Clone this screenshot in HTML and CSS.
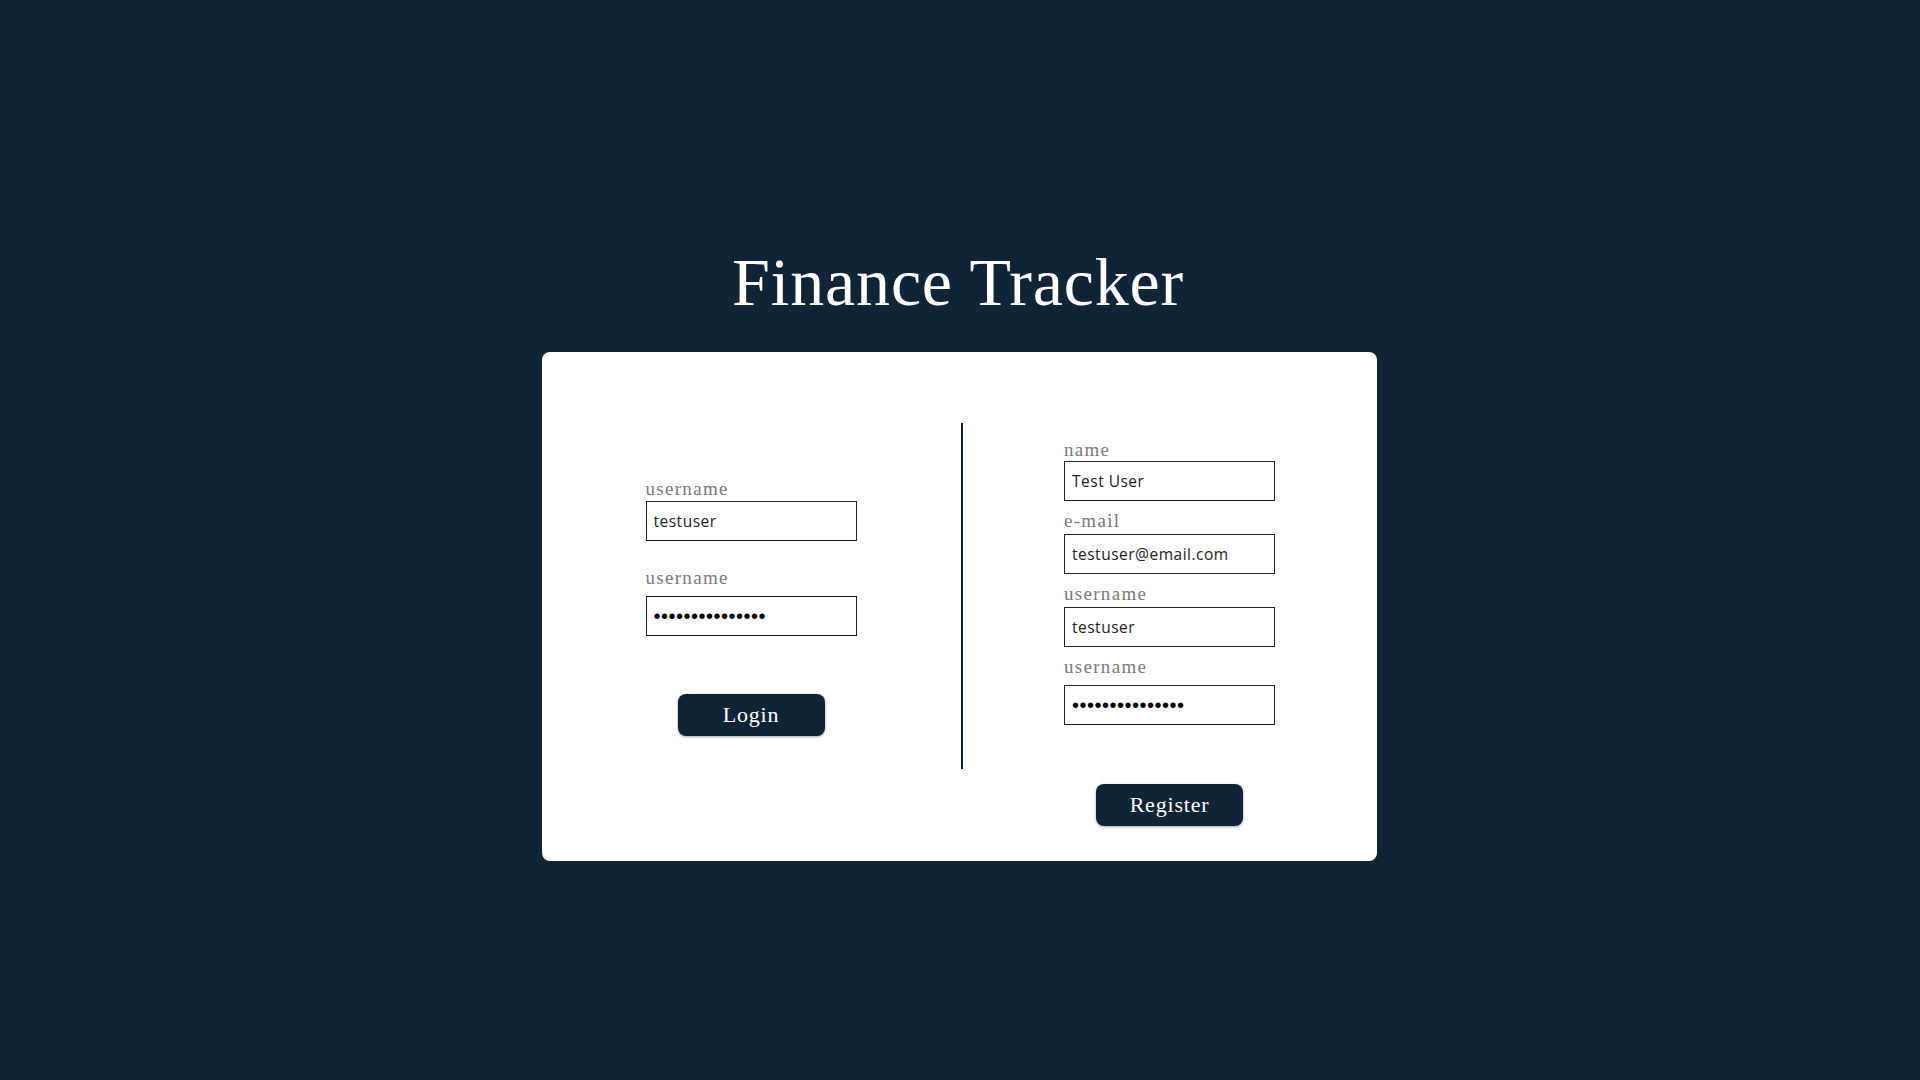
FILE: index.html
```html
<!DOCTYPE html>
<html lang="en">
<head>
<meta charset="utf-8">
<title>Finance Tracker</title>
<link rel="stylesheet" href="styles.css">
</head>
<body>
<main class="page">
  <h1 class="title">Finance Tracker</h1>
  <section class="card">
    <form class="col col-login">
      <label class="label">username</label>
      <input class="field" type="text" value="testuser">
      <label class="label label-gap">username</label>
      <input class="field field-pw" type="password" value="testpassword123">
      <button class="btn btn-login" type="button">Login</button>
    </form>
    <div class="divider"></div>
    <form class="col col-register">
      <label class="label">name</label>
      <input class="field" type="text" value="Test User">
      <label class="label label-r">e-mail</label>
      <input class="field" type="text" value="testuser@email.com">
      <label class="label label-r">username</label>
      <input class="field" type="text" value="testuser">
      <label class="label label-r label-pw">username</label>
      <input class="field" type="password" value="testpassword123">
      <button class="btn btn-register" type="button">Register</button>
    </form>
  </section>
</main>
</body>
</html>
```

FILE: styles.css
```css
html, body {
  margin: 0;
  padding: 0;
}
body {
  background: #0f2537;
  width: 1920px;
  height: 1080px;
  overflow: hidden;
  font-family: "Liberation Serif", serif;
}
.page {
  display: flex;
  flex-direction: column;
  align-items: center;
}
.title {
  margin: 242px 4px 30px 0;
  font-family: "Liberation Serif", serif;
  font-weight: 400;
  font-size: 68px;
  line-height: 80px;
  letter-spacing: 0.8px;
  color: #ffffff;
}
.card {
  width: 835px;
  height: 509px;
  margin-right: 2px;
  background: #ffffff;
  border-radius: 8px;
  display: grid;
  grid-template-columns: 419px 2px 414px;
  box-sizing: border-box;
}
.col {
  display: flex;
  flex-direction: column;
  align-items: center;
  margin: 0;
}
.col-login {
  padding-top: 127px;
}
.col-register {
  padding-top: 88px;
}
.divider {
  background: #0f2537;
  margin-top: 71px;
  height: 346px;
}
.label {
  width: 211px;
  font-family: "Liberation Serif", serif;
  font-size: 19px;
  line-height: 20px;
  letter-spacing: 1.3px;
  color: #7a7a7a;
}
.label:first-child {
  margin-bottom: 2px;
}
.col-register .label:first-child {
  margin-bottom: 1px;
}
.label-gap {
  margin-top: 27px;
  margin-bottom: 8px;
}
.label-r {
  margin-top: 10px;
  margin-bottom: 3px;
}
.label-pw {
  margin-bottom: 8px;
}
.field {
  width: 211px;
  height: 40px;
  box-sizing: border-box;
  border: 1px solid #222222;
  border-radius: 0;
  padding: 0 7px;
  margin: 0;
  font-family: "Open Sans", sans-serif;
  font-size: 15.5px;
  letter-spacing: 0.5px;
  color: #222222;
  background: #ffffff;
  outline: none;
}
.field[type="password"] {
  font-family: "Liberation Sans", sans-serif;
  font-size: 20px;
  letter-spacing: 0.5px;
  color: #000;
}
.btn {
  width: 147px;
  height: 42px;
  border: none;
  border-radius: 8px;
  background: #0f2537;
  color: #ffffff;
  font-family: "Liberation Serif", serif;
  font-size: 22px;
  letter-spacing: 0.8px;
  box-shadow: 0 1px 3px rgba(0, 0, 0, 0.35);
  padding: 0;
  cursor: pointer;
}
.btn-login {
  margin-top: 58px;
}
.btn-register {
  margin-top: 59px;
}
```
